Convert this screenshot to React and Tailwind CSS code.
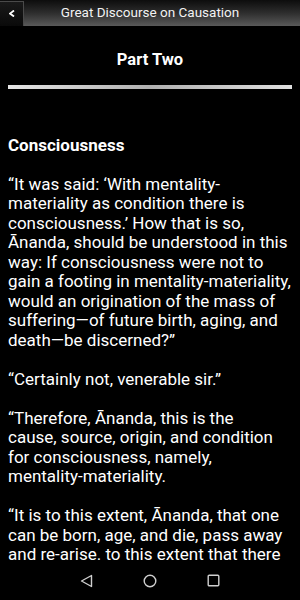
import React from "react";

const paragraphs = [
  ["“It was said: ‘With mentality-materiality as condition there is consciousness.’ How that is so, Ānanda, should be understood in this way: If consciousness were not to gain a footing in mentality-materiality, would an origination of the mass of suffering—of future birth, aging, and death—be discerned?”"],
  ["“Certainly not, venerable sir.”"],
  ["“Therefore, Ānanda, this is the", "cause, source, origin, and condition for consciousness, namely,", "mentality-materiality."],
  ["“It is to this extent, Ānanda, that one can be born, age, and die, pass away and re-arise. to this extent that there"],
];

const App = () => {
  return (
    <div
      className="relative h-[600px] w-[300px] overflow-hidden bg-black text-white"
      style={{ fontFamily: "Roboto, 'Liberation Sans', sans-serif" }}
    >
      {/* top bar */}
      <header className="relative flex h-[26px] items-center bg-gradient-to-b from-[#0d0d0d] via-[#2e2e2e] to-[#5a5a5a]">
        <button className="flex h-[25px] w-[24px] items-center justify-center border-r border-t border-[#4a4a4a] bg-gradient-to-b from-[#1a1a1a] to-[#0a0a0a]">
          <svg width="6" height="7" viewBox="0 0 6 7">
            <path d="M5 0.5 L1 3.5 L5 6.5" fill="none" stroke="#fff" strokeWidth="1.8" />
          </svg>
        </button>
        <div className="flex-1 pr-[24px] text-center text-[13.5px] leading-none text-[#f2f2f2]">
          Great Discourse on Causation
        </div>
      </header>

      <div className="px-[8px]">
        <h1 className="mt-[24px] text-center text-[16.5px] font-bold leading-[20px]">Part Two</h1>
        <div className="mt-[15px] h-[4px] bg-gradient-to-r from-[#e6e6e6] via-[#b0b0b0] to-[#e0e0e0]" />

        <h2 className="mt-[47px] text-[17px] font-bold leading-[19.5px]">Consciousness</h2>

        <div className="mt-[19px] flex flex-col gap-[19.5px] text-[17px] leading-[19.5px]">
          {paragraphs.map((parts, i) => (
            <p key={i}>
              {parts.map((t, j) => (
                <React.Fragment key={j}>
                  {j > 0 && <br />}
                  {t}
                </React.Fragment>
              ))}
            </p>
          ))}
        </div>
      </div>

      {/* android nav bar */}
      <nav className="absolute bottom-0 left-0 flex h-[39px] w-full items-center justify-center gap-[50px] bg-black">
        <svg width="13" height="14" viewBox="0 0 13 14">
          <path d="M11.5 1.5 L1.5 7 L11.5 12.5 Z" fill="none" stroke="#cfcfcf" strokeWidth="1.4" strokeLinejoin="round" />
        </svg>
        <svg width="14" height="14" viewBox="0 0 14 14">
          <circle cx="7" cy="7" r="5.8" fill="none" stroke="#cfcfcf" strokeWidth="1.4" />
        </svg>
        <svg width="13" height="13" viewBox="0 0 13 13">
          <rect x="1.2" y="1.2" width="10.6" height="10.6" rx="1" fill="none" stroke="#cfcfcf" strokeWidth="1.4" />
        </svg>
      </nav>
    </div>
  );
};

export default App;
